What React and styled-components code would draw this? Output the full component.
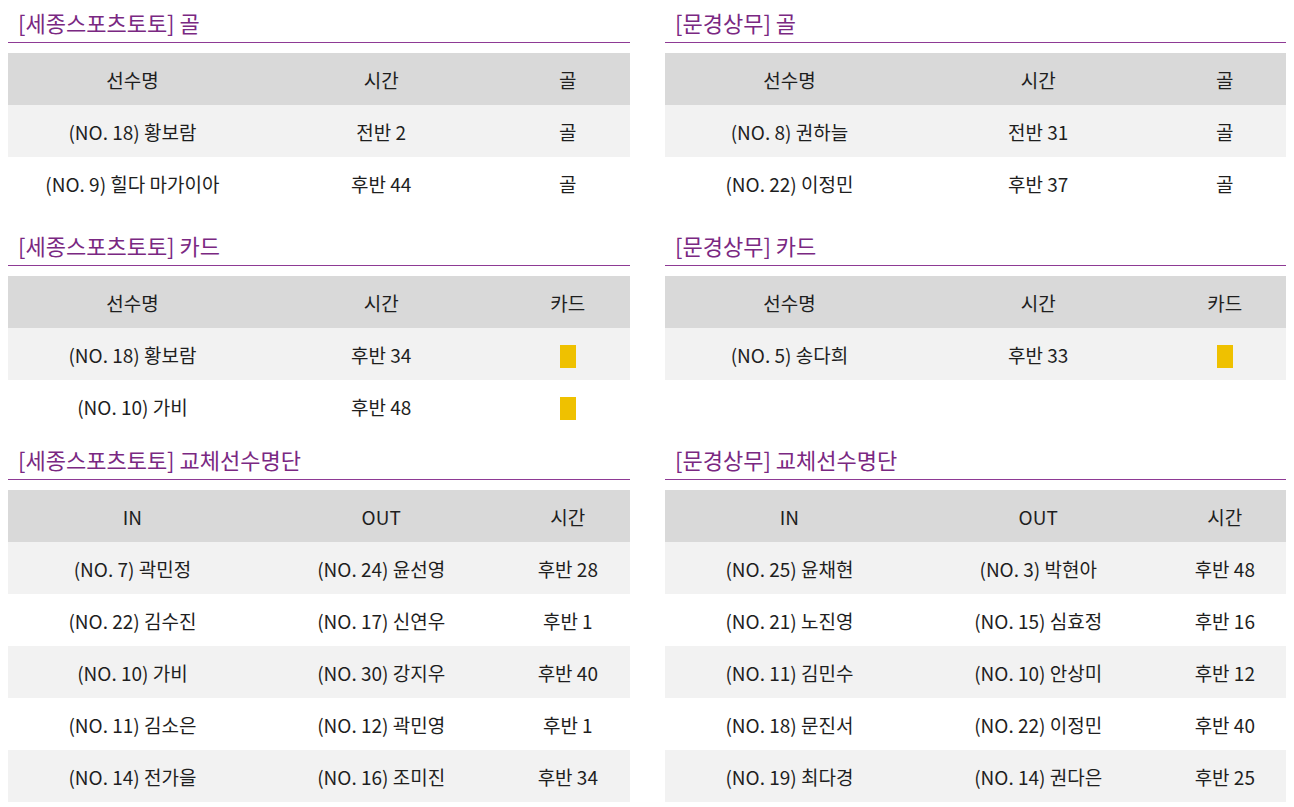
import styled, { createGlobalStyle } from 'styled-components';

const GlobalStyle = createGlobalStyle`
  body {
    margin: 8px;
    background: #fff;
    font-family: "Noto Sans CJK KR", "Noto Sans", sans-serif;
    color: #222;
  }
`;

const sejong = '세종스포츠토토';
const mungyeong = '문경상무';

const data = [
  {
    gap: 0,
    sections: [
      {
        title: `[${sejong}] 골`,
        head: ['선수명', '시간', '골'],
        rows: [
          ['(NO. 18) 황보람', '전반 2', '골'],
          ['(NO. 9) 힐다 마가이아', '후반 44', '골'],
        ],
      },
      {
        title: `[${mungyeong}] 골`,
        head: ['선수명', '시간', '골'],
        rows: [
          ['(NO. 8) 권하늘', '전반 31', '골'],
          ['(NO. 22) 이정민', '후반 37', '골'],
        ],
      },
    ],
  },
  {
    gap: 22,
    sections: [
      {
        title: `[${sejong}] 카드`,
        head: ['선수명', '시간', '카드'],
        rows: [
          ['(NO. 18) 황보람', '후반 34', 'yellow'],
          ['(NO. 10) 가비', '후반 48', 'yellow'],
        ],
      },
      {
        title: `[${mungyeong}] 카드`,
        head: ['선수명', '시간', '카드'],
        rows: [['(NO. 5) 송다희', '후반 33', 'yellow']],
      },
    ],
  },
  {
    gap: 13,
    sections: [
      {
        title: `[${sejong}] 교체선수명단`,
        head: ['IN', 'OUT', '시간'],
        rows: [
          ['(NO. 7) 곽민정', '(NO. 24) 윤선영', '후반 28'],
          ['(NO. 22) 김수진', '(NO. 17) 신연우', '후반 1'],
          ['(NO. 10) 가비', '(NO. 30) 강지우', '후반 40'],
          ['(NO. 11) 김소은', '(NO. 12) 곽민영', '후반 1'],
          ['(NO. 14) 전가을', '(NO. 16) 조미진', '후반 34'],
        ],
      },
      {
        title: `[${mungyeong}] 교체선수명단`,
        head: ['IN', 'OUT', '시간'],
        rows: [
          ['(NO. 25) 윤채현', '(NO. 3) 박현아', '후반 48'],
          ['(NO. 21) 노진영', '(NO. 15) 심효정', '후반 16'],
          ['(NO. 11) 김민수', '(NO. 10) 안상미', '후반 12'],
          ['(NO. 18) 문진서', '(NO. 22) 이정민', '후반 40'],
          ['(NO. 19) 최다경', '(NO. 14) 권다은', '후반 25'],
        ],
      },
    ],
  },
];

const App = () => {
  return (
    <>
      <GlobalStyle />
      <Page>
        {data.map((row, i) => (
          <Row key={i} $gap={row.gap}>
            {row.sections.map((section) => (
              <Section key={section.title}>
                <Title>{section.title}</Title>
                <Table>
                  <colgroup>
                    <col style={{ width: '40%' }} />
                    <col style={{ width: '40%' }} />
                    <col style={{ width: '20%' }} />
                  </colgroup>
                  <thead>
                    <tr>
                      {section.head.map((h) => (
                        <Th key={h}>{h}</Th>
                      ))}
                    </tr>
                  </thead>
                  <tbody>
                    {section.rows.map((r, j) => (
                      <Tr key={j}>
                        {r.map((cell, k) =>
                          cell === 'yellow' ? (
                            <Td key={k}>
                              <YellowCard />
                            </Td>
                          ) : (
                            <Td key={k}>{cell}</Td>
                          )
                        )}
                      </Tr>
                    ))}
                  </tbody>
                </Table>
              </Section>
            ))}
          </Row>
        ))}
      </Page>
    </>
  );
};

export default App;

const Page = styled.div`
  display: flex;
  flex-direction: column;
  width: 1279px;
`;

const Row = styled.div`
  display: grid;
  grid-template-columns: 622px 622px;
  column-gap: 35px;
  align-items: start;
  margin-top: ${(p) => p.$gap}px;
`;

const Section = styled.section`
  display: flex;
  flex-direction: column;
`;

const Title = styled.h3`
  margin: 0 0 10px;
  padding: 0 10px 6px;
  font-size: 22px;
  line-height: 28px;
  font-weight: 400;
  color: #7a2882;
  border-bottom: 1px solid #8e3a95;
`;

const Table = styled.table`
  width: 100%;
  border-collapse: collapse;
  table-layout: fixed;
  font-size: 19px;
`;

const Th = styled.th`
  height: 52px;
  padding: 0;
  background: #d9d9d9;
  font-weight: 400;
  text-align: center;
  color: #1e1e1e;
`;

const Tr = styled.tr`
  &:nth-child(odd) {
    background: #f2f2f2;
  }
`;

const Td = styled.td`
  height: 52px;
  padding: 0;
  text-align: center;
  vertical-align: middle;
  color: #1e1e1e;
`;

const YellowCard = styled.span`
  display: inline-block;
  width: 16px;
  height: 23px;
  vertical-align: middle;
  background: #efc100;
`;
